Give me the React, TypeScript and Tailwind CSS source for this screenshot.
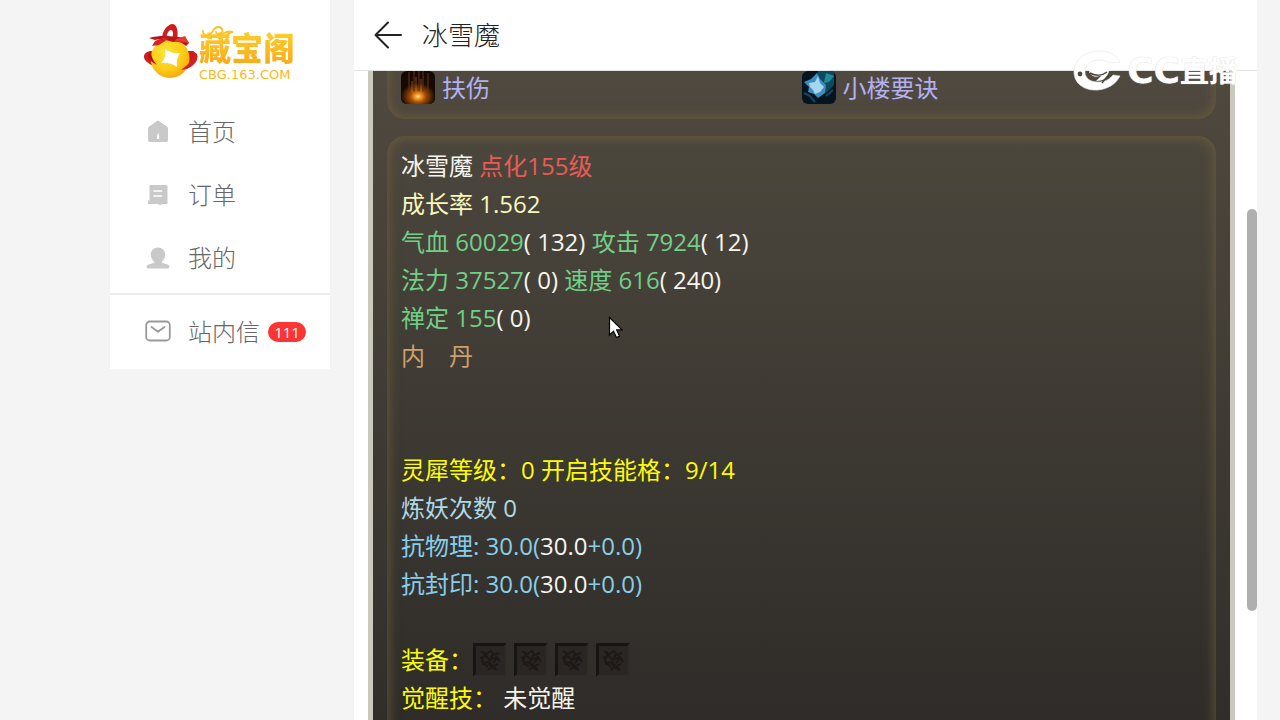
import type { ReactNode } from "react";

const font = "font-['Open_Sans','Noto_Sans_CJK_SC',sans-serif]";

const NAV = [
  { icon: "home", label: "首页" },
  { icon: "order", label: "订单" },
  { icon: "user", label: "我的" },
];

const SLOTS = [1, 2, 3, 4];

function NavIcon({ name }: { name: string }) {
  if (name === "home")
    return (
      <svg className="h-6 w-6" viewBox="0 0 24 24" fill="#c9c9c9" aria-hidden="true">
        <path d="M10.4 1.4a2.6 2.6 0 0 1 3.2 0l7.2 5.2a3 3 0 0 1 1.2 2.4v10.4a2.6 2.6 0 0 1-2.6 2.6H4.6A2.6 2.6 0 0 1 2 19.4V9a3 3 0 0 1 1.2-2.4z" />
        <path d="M11 19v-3.500l1.500-2.500.6 2.500V19z" fill="#fff" />
      </svg>
    );
  if (name === "order")
    return (
      <svg className="h-6 w-6" viewBox="0 0 24 24" fill="#c9c9c9" aria-hidden="true">
        <path d="M4 2h16a1.500 1.500 0 0 1 1.500 1.500V21H16l-1.500 1-3-1H2v-3.500h1.500V3.500A1.500 1.500 0 0 1 4 2z" />
        <path d="M8 8h7.500M8 13h7.500" stroke="#fff" strokeWidth="1.600" strokeLinecap="round" />
      </svg>
    );
  return (
    <svg className="h-6 w-6" viewBox="0 0 24 24" fill="#c9c9c9" aria-hidden="true">
      <path d="M12 1.500c4.200 0 7.200 3 7.200 7 0 3-1.300 5.600-3.300 7v1.200l5.600 1.800c1.400.5 2 1.400 2 2.300 0 1-.8 1.700-2 1.700h-19c-1.200 0-2-.7-2-1.700 0-.9.600-1.800 2-2.300l5.600-1.800v-1.200c-2-1.400-3.300-4-3.300-7 0-4 3-7 7.200-7z" />
    </svg>
  );
}

function MailIcon() {
  return (
    <svg className="h-6 w-[26px]" viewBox="0 0 26 24" fill="none" stroke="#999" strokeWidth="1.800" strokeLinecap="round" strokeLinejoin="round" aria-hidden="true">
      <rect x="1.200" y="1.500" width="23.600" height="19" rx="3.500" />
      <path d="M6.500 7l6.500 4.800L19.500 7" />
    </svg>
  );
}

function CoinLogo() {
  return (
    <svg className="h-[58px] w-[56px] shrink-0" viewBox="0 0 56 58" aria-hidden="true">
      <defs>
        <radialGradient id="coin" cx="0.4" cy="0.35" r="0.75">
          <stop offset="0" stopColor="#ffe43c" />
          <stop offset="0.600" stopColor="#fccb14" />
          <stop offset="1" stopColor="#f39a10" />
        </radialGradient>
      </defs>
      <path d="M8 29C0 30-1 36 4 40c5 4 10 6 16 8L42 48c8-4 14-10 12-16l-4-3z" fill="#cf1c20" />
      <circle cx="27" cy="36.500" r="19.500" fill="url(#coin)" />
      <path d="M8 29c-5 3-3 8 1 11l5 3c-4-4-6-9-6-14z" fill="#b5141a" />
      <path d="M50 29c3 5-1 10-7 15l-5 4c10-1 18-8 16-15z" fill="#d22022" />
      <path d="M22 27Q28 32 37 31Q33 37 34 45Q27 40 18 41Q24 35 22 27z" fill="#fff" />
      <path d="M19 17C19 9 24 3 29 2c5 0 6 6 5.500 14l-5-1c1-4 .5-7-2-7C25 9 23 13 24 17z" fill="#cf1c1f" />
      <path d="M6 16c10-3 20-2 28-1 5 0 9 1 12 6l-3 3c-4-4-8-5-13-4-6-2-12-3-18-2z" fill="#b9161b" />
      <path d="M22 15l-10 4-3 5 7-1 9-6z" fill="#d62424" />
      <path d="M33 17l9-3 4 7-6-1-8-1z" fill="#e23a2c" />
    </svg>
  );
}

function FireSkill() {
  return (
    <svg className="h-[33px] w-[34px] rounded-md" viewBox="0 0 34 33" aria-hidden="true">
      <defs>
        <radialGradient id="fire" cx="0.500" cy="0.720" r="0.500">
          <stop offset="0" stopColor="#fff0a0" />
          <stop offset="0.150" stopColor="#f9a528" />
          <stop offset="0.450" stopColor="#a34b0a" />
          <stop offset="1" stopColor="#170a04" />
        </radialGradient>
      </defs>
      <rect width="34" height="33" fill="#120805" />
      <rect y="6" width="34" height="27" fill="url(#fire)" />
      <path d="M8 1v20M13 0v20M18 0v20M22 0v20M27 2v18" stroke="#6b300c" strokeWidth="1.500" opacity="0.700" />
      <path d="M15 6v16M20 8v14M11 10v12" stroke="#e08726" strokeWidth="1" opacity="0.500" />
    </svg>
  );
}

function IceSkill() {
  return (
    <svg className="h-[33px] w-[34px] rounded-md" viewBox="0 0 34 33" aria-hidden="true">
      <rect width="34" height="33" fill="#06141f" />
      <path d="M16 0h16v14l-8 8-12-6z" fill="#0d4a60" />
      <path d="M24 2l8 3-5 6-5 1z" fill="#1f8c9c" />
      <path d="M2 11l7-3 6-6 3 6 6 6-1 8-7 5-4-4-6-2 1-5z" fill="#3f8cc0" />
      <path d="M7 12l6-1 3-6 2 7 4 4-4 5-5 2-2-4-3-3z" fill="#a5d6ee" />
      <path d="M2 22l6 3 5 6M24 25l7-6" stroke="#174562" strokeWidth="2" fill="none" />
    </svg>
  );
}

function EmptySlot() {
  return (
    <svg className="h-[34px] w-[34px]" viewBox="0 0 34 34" aria-hidden="true">
      <rect width="34" height="34" fill="#2a2623" />
      <path d="M0 34V0h34l-3 3H3v28z" fill="#171513" />
      <path d="M34 0v34H0l2-2h30V2z" fill="#302c28" />
      <path d="M8 8l5 3 5-3 3 4 5-2M7 15l6-2 4 4 7-3 3 5M9 21l5-2 5 5 6-3M12 9l-3 9 6 6M20 11l-4 8 7 7M25 14l-5 6M15 27l3-3 6 3" stroke="#1c1816" strokeWidth="2" fill="none" opacity="0.850" />
    </svg>
  );
}

function WatermarkIcon() {
  return (
    <svg className="h-[44px] w-[50px]" viewBox="0 0 50 44" fill="none" aria-hidden="true">
      <path d="M47 13C43 5 34 1 24 2 11 3 1 11 1 23c0 12 11 19 24 18 10-1 18-6 22-14l-7-1c-4 5-9 7-15 7-8 0-13-4-13-10 0-7 6-12 14-12 5 0 8 1 10 3z" fill="#fff" stroke="#e6e6e6" strokeWidth="0.600" />
      <path d="M16 23c3-7 11-10 18-6l11-2c-2 4-5 6-9 7-1 7-6 10-13 10l6-6c-6 3-10 2-13-3z" fill="#fff" />
      <path d="M17 24c5 3 12 3 17-1M29 34l8-10" stroke="#4d483d" strokeWidth="1.500" />
      <circle cx="7" cy="25" r="2.400" fill="#4d483d" />
    </svg>
  );
}

// the part of a stat that was added by hand
function Bonus({ children }: { children: ReactNode }) {
  return <span className="text-[#f6f4ee]">{children}</span>;
}

function Row({ children, className = "" }: { children?: ReactNode; className?: string }) {
  return <p className={`h-[38px] whitespace-pre ${className}`}>{children}</p>;
}

const card = "px-[14px] shadow-[inset_0_0_12px_2px_rgba(118,102,62,0.650)]";

export default function App() {
  return (
    <div className={`relative flex h-screen items-start gap-6 overflow-hidden bg-[#f4f4f4] pr-[23px] pl-[110px] ${font}`}>
      <aside className="w-[220px] shrink-0 bg-white">
        <div className="flex h-[100px] items-start pt-[22px] pl-[33px]">
          <CoinLogo />
          <div className="relative pt-2 text-[#fbb81b]">
            <svg className="absolute top-[3px] left-[2px] h-[14px] w-[34px]" viewBox="0 0 34 14" fill="none" stroke="#fbc02b" strokeWidth="1.800" strokeLinecap="round" aria-hidden="true">
              <path d="M2 6c0 4 3 5 6 4 4-1 4-8 9-8 4 0 6 4 3 6-2 2-5 1-5-1M8 11c5 2 9 0 12-1 4-2 6-5 12-3-4 0-6 3-8 5" />
            </svg>
            <div className="bg-linear-to-b from-[#fdd02a] to-[#f9a81a] bg-clip-text text-[32px] leading-[36px] font-black text-transparent">藏宝阁</div>
            <div className="mt-[2px] font-['DejaVu_Sans',sans-serif] text-[13px] leading-[13px]">CBG.163.COM</div>
          </div>
        </div>
        <nav className="text-[24px] font-light text-[#666]">
          {NAV.map((n) => (
            <a key={n.label} href="#" className="flex h-[63px] items-center gap-[18px] pl-9">
              <NavIcon name={n.icon} />
              {n.label}
            </a>
          ))}
          <a href="#" className="mt-1 flex h-[76px] items-center border-t-2 border-[#ebebeb] pl-[35px]">
            <MailIcon />
            <span className="ml-[17px]">站内信</span>
            <span className="ml-2 flex h-5 w-[38px] items-center justify-center rounded-full bg-[#fb3434] text-[15px] font-medium text-white">111</span>
          </a>
        </nav>
      </aside>

      <main className="min-w-0 flex-1 bg-white">
        <header className="flex h-[71px] items-center gap-[20px] border-b border-[#e4e4e4] pl-5">
          <button type="button" aria-label="返回">
            <svg className="h-7 w-7" viewBox="0 0 28 28" fill="none" stroke="#222" strokeWidth="2" strokeLinecap="round" strokeLinejoin="round" aria-hidden="true">
              <path d="M14 1.500L1.500 14 14 26.500M1.500 14h25.500" />
            </svg>
          </button>
          <h1 className="text-[26px] font-light text-[#222]">冰雪魔</h1>
        </header>

        <div className="mr-[22px] ml-[14px] border-x-5 border-[#cbc8be] bg-linear-to-b from-[#50493f] to-[#302d29] px-[14px] text-[24px] leading-[38px] text-[#f6f4ee]">
          {/* top edge of this card is scrolled away, so it gets no glow there */}
          <section className="overflow-hidden rounded-b-[18px]">
            <div className={`-mt-5 grid grid-cols-2 rounded-b-[18px] pt-5 pb-[15px] text-[#b3b0f2] ${card}`}>
              <div className="flex h-[33px] items-center gap-[7px]"><FireSkill />扶伤</div>
              <div className="flex h-[33px] items-center gap-[7px]"><IceSkill />小楼要诀</div>
            </div>
          </section>

          <section className={`mt-[17px] rounded-t-[18px] bg-linear-to-b from-[#4c473d] to-[#2e2b28] pt-[11px] pb-6 ${card}`}>
            <Row>冰雪魔 <span className="text-[#ea5b55]">点化155级</span></Row>
            <Row className="text-[#f8f8bd]">成长率 1.562</Row>
            <Row className="text-[#71cf87]">气血 60029<Bonus>( 132)</Bonus> 攻击 7924<Bonus>( 12)</Bonus></Row>
            <Row className="text-[#71cf87]">法力 37527<Bonus>( 0)</Bonus> 速度 616<Bonus>( 240)</Bonus></Row>
            <Row className="text-[#71cf87]">禅定 155<Bonus>( 0)</Bonus></Row>
            <Row className="text-[#cda06b]">内　丹</Row>
            <Row />
            <Row />
            <Row className="text-[#fbfb07]">灵犀等级：0 开启技能格：9/14</Row>
            <Row className="text-[#add8e6]">炼妖次数 0</Row>
            <Row className="text-[#87ceeb]">抗物理: 30.0(<Bonus>30.0</Bonus>+0.0)</Row>
            <Row className="text-[#87ceeb]">抗封印: 30.0(<Bonus>30.0</Bonus>+0.0)</Row>
            <Row />
            <div className="flex h-[38px] items-center text-[#fbfb07]">
              装备：
              <div className="flex gap-[7px]">{SLOTS.map((s) => <EmptySlot key={s} />)}</div>
            </div>
            <Row className="text-[#fbfb07]">觉醒技： <span className="text-[#f6f4ee]">未觉醒</span></Row>
          </section>
        </div>
      </main>

      {/* scroll thumb */}
      <div className="absolute top-[209px] right-[23px] h-[402px] w-[10px] rounded-full bg-[#afafaf]" />

      {/* stream watermark */}
      <div className="absolute top-[49px] right-[42px] flex items-center gap-1 font-bold text-white [text-shadow:0_0_1px_#c4c4c4]">
        <WatermarkIcon />
        <div className="flex items-center leading-[44px]">
          <span className="font-['DejaVu_Sans',sans-serif] text-[36px]">CC</span>
          <span className="text-[29px]">直播</span>
        </div>
      </div>

      {/* mouse pointer */}
      <svg className="absolute top-[316px] left-[608px] h-[24px] w-[16px]" viewBox="0 0 16 24" fill="#fff" stroke="#000" strokeWidth="1.200" aria-hidden="true">
        <path d="M1.500 1.500v17.500l4-3.800 3 6.300 3-1.400-2.800-6.200h5.300z" />
      </svg>
    </div>
  );
}
